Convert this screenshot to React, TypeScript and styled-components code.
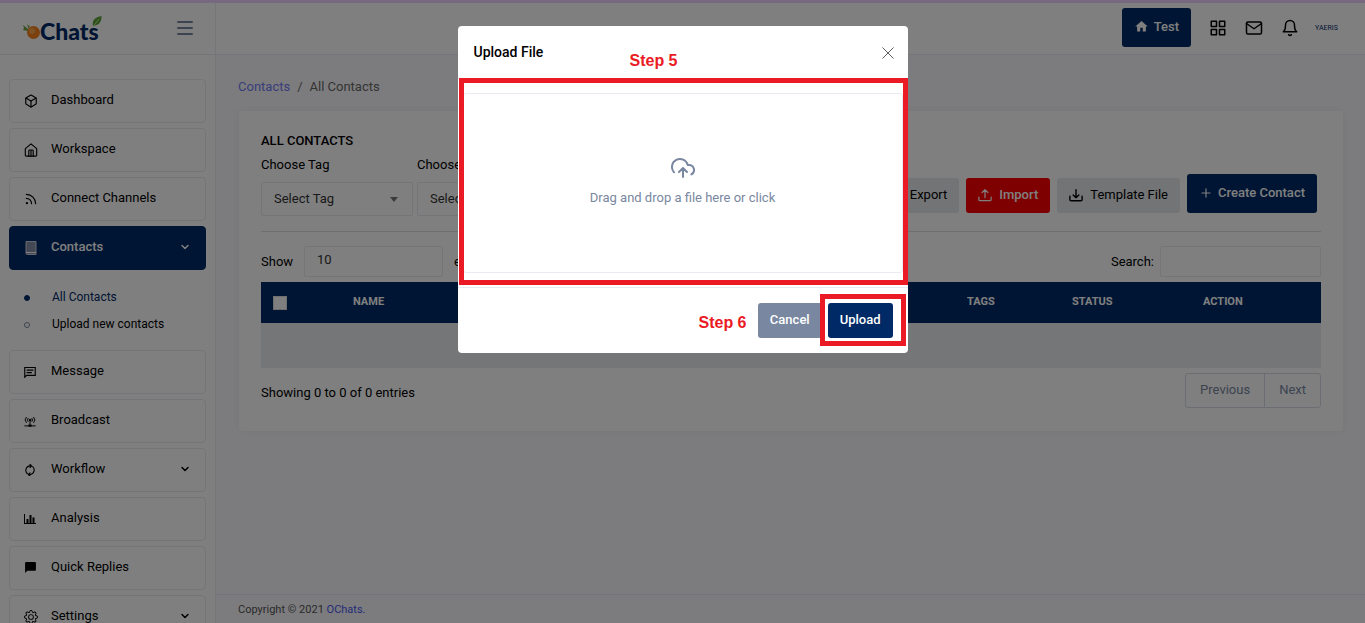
import React from "react";
import styled, { createGlobalStyle } from "styled-components";
import { FiBell, FiBox, FiChevronDown, FiGrid, FiMail, FiPlus, FiRss } from "react-icons/fi";
import { MdChatBubble, MdHome } from "react-icons/md";
import { BsGear } from "react-icons/bs";

const navy = "#002a66";
const muted = "#7987a1";
const line = "#e8ebf1";
const markRed = "#ea1b25";

const GlobalStyle = createGlobalStyle`
  *, *::before, *::after { box-sizing: border-box; }
  body {
    margin: 0;
    overflow: hidden;
    background: #f9f9fc;
    color: #000;
    font-family: Roboto, "Liberation Sans", sans-serif;
    font-size: 13px;
    line-height: 20px;
  }
  button, input, select { font: inherit; color: inherit; }
  a { color: inherit; text-decoration: none; }
`;

const Page = styled.div`
  display: flex;
  height: 100vh;
  overflow: hidden;
  border-top: 3px solid #edd2ff;
`;

const Sidebar = styled.aside`
  flex: 0 0 216px;
  background: #fff;
  border-right: 1px solid ${line};
`;

const SidebarHeader = styled.div`
  display: flex;
  align-items: center;
  justify-content: space-between;
  height: 52px;
  padding: 0 22px 2px;
  border-bottom: 1px solid ${line};
`;

const Logo = styled.a`
  display: flex;
  align-items: center;
  position: relative;
  color: ${navy};
  font-family: Lato, sans-serif;
  font-size: 23px;
  font-weight: 900;
  line-height: 24px;
  padding-top: 6px;
`;

const Leaf = styled.svg`
  position: absolute;
  top: 3px;
  right: -3px;
`;

const MenuToggle = styled.button`
  display: grid;
  gap: 4px;
  width: 16px;
  padding: 0;
  border: 0;
  background: none;
  span { height: 2px; border-radius: 1px; background: ${muted}; }
`;

const Nav = styled.nav`
  padding: 24px 9px 0;
`;

const NavItem = styled.a<{ $active?: boolean }>`
  display: flex;
  align-items: center;
  height: 44px;
  margin-bottom: 5px;
  padding: 0 14px 2px;
  border: 1px solid ${(p) => (p.$active ? navy : line)};
  border-radius: 4px;
  background: ${(p) => (p.$active ? navy : "#fff")};
  color: ${(p) => (p.$active ? "#fff" : "#000")};
  font-weight: ${(p) => (p.$active ? 500 : 400)};
`;

const NavIcon = styled.span`
  display: flex;
  width: 14px;
  margin-right: 13px;
  padding-top: 1px;
`;

const NavText = styled.span`
  flex: 1;
`;

const SubMenu = styled.ul`
  margin: 0;
  padding: 9px 0 12px 15px;
  list-style: none;
`;

const SubItem = styled.li<{ $current?: boolean }>`
  height: 27px;
  font-size: 12px;
  line-height: 27px;
  color: ${(p) => (p.$current ? navy : "#000")};
  a { display: flex; align-items: center; gap: 22px; }
  a::before {
    content: "";
    width: 6px;
    height: 6px;
    border: 1px solid ${(p) => (p.$current ? navy : muted)};
    border-radius: 50%;
    background: ${(p) => (p.$current ? navy : "transparent")};
  }
`;

const Main = styled.div`
  flex: 1;
  min-width: 0;
  display: flex;
  flex-direction: column;
`;

const Topbar = styled.header`
  display: flex;
  align-items: center;
  justify-content: flex-end;
  gap: 18px;
  height: 52px;
  padding: 0 28px 2px;
  border-bottom: 1px solid ${line};
  background: #fff;
`;

const IconButton = styled.button`
  display: flex;
  padding: 0;
  border: 0;
  background: none;
`;

const Avatar = styled.a`
  width: 22px;
  margin-left: -2px;
  color: ${navy};
  font-size: 7px;
  line-height: 8px;
`;

const Content = styled.main`
  flex: 1;
  padding: 22px 22px 0;
`;

const Breadcrumb = styled.nav`
  display: flex;
  gap: 7px;
  margin-bottom: 14px;
  color: #686868;
  a { color: #727cf5; }
`;

const Card = styled.section`
  margin-left: 1px;
  padding: 20px 22px 23px;
  border-radius: 4px;
  background: #fff;
  box-shadow: 0 0 10px rgba(183, 192, 206, 0.2);
`;

const CardTitle = styled.h1`
  margin: 0 0 4px;
  font-size: 13px;
  font-weight: 500;
  line-height: 20px;
`;

const Toolbar = styled.div`
  display: flex;
  align-items: flex-end;
  justify-content: space-between;
  padding-bottom: 15px;
  border-bottom: 1px solid #dcdfe5;
`;

const Filters = styled.div`
  display: flex;
  gap: 4px;
`;

const Field = styled.label`
  position: relative;
  display: grid;
  gap: 7px;
  width: 152px;
  &::after {
    content: "";
    position: absolute;
    right: 15px;
    bottom: 14px;
    border: 4px solid transparent;
    border-top: 5px solid #777;
    border-bottom: 0;
  }
`;

const Select = styled.select`
  appearance: none;
  height: 34px;
  padding: 0 12px;
  border: 1px solid ${line};
  border-radius: 2px;
  background: #fff;
  color: #333;
`;

const Actions = styled.div`
  display: flex;
  align-items: flex-end;
  gap: 7px;
  padding: 0 4px 3px 0;
`;

type Tone = "navy" | "red" | "grey" | "muted";
const toneColors: Record<Tone, string> = { navy, red: "#ff0000", grey: "#e6e8eb", muted };

const Button = styled.button<{ $tone: Tone; $tall?: boolean }>`
  display: flex;
  align-items: center;
  gap: ${(p) => (p.$tall ? 5 : 7)}px;
  height: ${(p) => (p.$tall ? 39 : 35)}px;
  padding: 0 12px ${(p) => (p.$tall ? 2 : 1)}px;
  border: 0;
  border-radius: 3px;
  background: ${(p) => toneColors[p.$tone]};
  color: ${(p) => (p.$tone === "grey" ? "#000" : "#fff")};
  font-weight: ${(p) => (p.$tone === "grey" ? 400 : 500)};
  white-space: nowrap;
`;

const TableTools = styled.div`
  display: flex;
  justify-content: space-between;
  padding: 14px 0 5px;
`;

const InlineField = styled.label<{ $gap: number }>`
  display: flex;
  align-items: center;
  gap: ${(p) => p.$gap}px;
`;

const LengthSelect = styled(Select)`
  width: 139px;
  height: 31px;
  padding-bottom: 3px;
`;

const SearchInput = styled.input`
  width: 161px;
  height: 31px;
  padding: 0 10px;
  border: 1px solid ${line};
  border-radius: 2px;
  background: #fff;
`;

const Table = styled.table`
  width: 100%;
  table-layout: fixed;
  border-collapse: collapse;
  th {
    height: 41px;
    padding: 0 12px 2px;
    background: ${navy};
    color: #fff;
    font-size: 11px;
    font-weight: 700;
    text-align: left;
  }
  td { height: 45px; background: #e9ecef; }
`;

const Checkbox = styled.input`
  appearance: none;
  display: block;
  width: 14px;
  height: 14px;
  margin: 3px 0 0;
  border: 1px solid #ddd;
  background: #fff;
`;

const TableFooter = styled.div`
  display: flex;
  justify-content: space-between;
  padding-top: 5px;
  p { margin: 0; padding-top: 10px; }
`;

const Pager = styled.div`
  display: flex;
  height: 35px;
  border: 1px solid #d5dae3;
  border-radius: 3px;
  button {
    padding: 0 14px 2px;
    border: 0;
    background: none;
    color: ${muted};
  }
  button + button { border-left: 1px solid #d5dae3; }
`;

const Footer = styled.footer`
  height: 29px;
  padding: 5px 22px;
  border-top: 1px solid ${line};
  color: #555;
  font-size: 11px;
  a { color: #4a55f0; }
`;

const Backdrop = styled.div`
  position: fixed;
  inset: 0;
  padding-top: 26px;
  background: rgba(0, 0, 0, 0.5);
`;

const Dialog = styled.div`
  position: relative;
  width: 450px;
  margin: 0 auto;
  border-radius: 4px;
  background: #fff;
`;

const DialogHeader = styled.div`
  display: flex;
  align-items: center;
  justify-content: space-between;
  height: 52px;
  padding: 0 14px 0 16px;
  h2 { margin: 0; font-size: 14px; font-weight: 500; }
  button { padding-top: 2px; color: #555; }
`;

const DropArea = styled.label`
  display: flex;
  flex-direction: column;
  align-items: center;
  justify-content: center;
  gap: 8px;
  height: 180px;
  margin: 15px 5px 14px;
  padding-bottom: 3px;
  border: 1px solid ${line};
  border-radius: 3px;
  color: ${muted};
  input { display: none; }
`;

const DialogFooter = styled.div`
  display: flex;
  justify-content: flex-end;
  gap: 6px;
  padding: 15px;
  border-top: 1px solid ${line};
`;

const Highlight = styled.div<{ $x: number; $y: number; $w: number; $h: number }>`
  position: absolute;
  left: ${(p) => p.$x}px;
  top: ${(p) => p.$y}px;
  width: ${(p) => p.$w}px;
  height: ${(p) => p.$h}px;
  border: 5px solid ${markRed};
  pointer-events: none;
`;

const StepLabel = styled.strong<{ $x: number; $y: number }>`
  position: absolute;
  left: ${(p) => p.$x}px;
  top: ${(p) => p.$y}px;
  color: ${markRed};
  font: bold 16px/20px "Liberation Sans", sans-serif;
`;

const Stroke = ({ size = 14, width = 1.3, children }: { size?: number; width?: number; children: React.ReactNode }) => (
  <svg width={size} height={size} viewBox="0 0 16 16" fill="none" stroke="currentColor" strokeWidth={width} strokeLinecap="round" strokeLinejoin="round" aria-hidden="true">
    {children}
  </svg>
);

const HomeIcon = () => (
  <Stroke>
    <path d="M1.500 6.500 8 1l6.500 5.500V14a1 1 0 0 1-1 1h-11a1 1 0 0 1-1-1z" />
    <path d="M5.500 15V9a1 1 0 0 1 1-1h3a1 1 0 0 1 1 1v6M8 8v7" />
  </Stroke>
);

const BookIcon = () => (
  <svg width="14" height="16" viewBox="0 0 14 16" aria-hidden="true">
    <path d="M2 1.500h10v13H3.500A1.500 1.500 0 0 1 2 13z" fill="#8791a8" stroke="#cdd2de" />
    <path d="M2 12.500h10" stroke="#fff" />
  </svg>
);

const MessageIcon = () => (
  <Stroke size={12} width={1.5}>
    <path d="M1 2h14v10.500H3.500L1 15zM4 5.500h8M4 8.800h6" strokeLinejoin="miter" />
  </Stroke>
);

const BroadcastIcon = () => (
  <Stroke size={12} width={1.3}>
    <path d="M3 3Q-.5 6.500 3 10M5.300 4.500q-1.800 2 0 4M13 3q3.500 3.500 0 7M10.700 4.500q1.800 2 0 4M8 7v7M1 14.500h14" />
    <circle cx="8" cy="6.500" r="1" fill="currentColor" />
    <path d="M7 14h2" strokeWidth="3" />
  </Stroke>
);

const SyncIcon = () => (
  <Stroke size={12} width={1.5}>
    <path d="M4.500 13A6 6 0 0 1 8 2.500h2M8 .5l2.200 2L8 4.700M11.500 3.500A6 6 0 0 1 8 14H6M8 11.800 5.800 14 8 16" />
  </Stroke>
);

const ChartIcon = () => (
  <svg width="12" height="12" viewBox="0 0 12 12" fill="currentColor" aria-hidden="true">
    <path d="M0 1h1v9h11v1H0zM2.500 6h2v4h-2zM5.500 2h2v8h-2zM8.500 4.500h2V10h-2z" />
  </svg>
);

const UploadIcon = () => (
  <Stroke width={1.4}>
    <path d="M8 11V2M4.700 5.200 8 2l3.300 3.200M1 10.500V13q0 1.500 1.500 1.500h11q1.500 0 1.500-1.500v-2.500" />
  </Stroke>
);

const DownloadIcon = () => (
  <Stroke width={1.6}>
    <path d="M8 2v9M4.700 8 8 11l3.300-3M1 9.500V13q0 1.500 1.500 1.500h11q1.500 0 1.500-1.500V9.500" />
  </Stroke>
);

const CloudIcon = () => (
  <svg width="24" height="24" viewBox="0 0 24 24" fill="none" stroke="currentColor" strokeWidth="2" strokeLinecap="round" strokeLinejoin="round" aria-hidden="true">
    <path d="m16 16-4-4-4 4M12 12v9" />
    <path d="M20.390 18.390A5 5 0 0 0 18 9h-1.260A8 8 0 1 0 3 16.300" />
  </svg>
);

const Item = ({ icon, label, more, active }: { icon: React.ReactNode; label: string; more?: boolean; active?: boolean }) => (
  <NavItem href="#" $active={active}>
    <NavIcon>{icon}</NavIcon>
    <NavText>{label}</NavText>
    {more && <FiChevronDown size={12} strokeWidth={3} />}
  </NavItem>
);

export default function App() {
  return (
    <>
      <GlobalStyle />
      <Page>
        <Sidebar>
          <SidebarHeader>
            <Logo href="#">
              <svg width="18" height="18" viewBox="0 0 18 18" aria-hidden="true">
                <path d="M6 7 1 3l1 3-1 2 5 1zM6 6l-.5-4L8 5z" fill="#6ba539" />
                <circle cx="11.500" cy="10.500" r="6.500" fill="#f5821f" />
                <circle cx="10" cy="9" r="3" fill="#fba74c" />
              </svg>
              Chats
              <Leaf width="10" height="11" viewBox="0 0 10 11" aria-hidden="true">
                <path d="M1 10Q-1 2 9.500 0 10 8 3 9.500z" fill="#5fa53a" />
                <path d="M1 10.500 7 3" stroke="#b9dc8f" fill="none" />
              </Leaf>
            </Logo>
            <MenuToggle aria-label="Toggle menu">
              <span />
              <span />
              <span />
            </MenuToggle>
          </SidebarHeader>
          <Nav>
            <Item icon={<FiBox size={14} />} label="Dashboard" />
            <Item icon={<HomeIcon />} label="Workspace" />
            <Item icon={<FiRss size={14} />} label="Connect Channels" />
            <Item icon={<BookIcon />} label="Contacts" more active />
            <SubMenu>
              <SubItem $current>
                <a href="#">All Contacts</a>
              </SubItem>
              <SubItem>
                <a href="#">Upload new contacts</a>
              </SubItem>
            </SubMenu>
            <Item icon={<MessageIcon />} label="Message" />
            <Item icon={<BroadcastIcon />} label="Broadcast" />
            <Item icon={<SyncIcon />} label="Workflow" more />
            <Item icon={<ChartIcon />} label="Analysis" />
            <Item icon={<MdChatBubble size={13} />} label="Quick Replies" />
            <Item icon={<BsGear size={14} />} label="Settings" more />
          </Nav>
        </Sidebar>

        <Main>
          <Topbar>
            <Button $tone="navy" $tall>
              <MdHome size={15} />
              Test
            </Button>
            <IconButton aria-label="Apps"><FiGrid size={18} /></IconButton>
            <IconButton aria-label="Mail"><FiMail size={18} /></IconButton>
            <IconButton aria-label="Notifications"><FiBell size={18} /></IconButton>
            <Avatar href="#">YAERIS</Avatar>
          </Topbar>

          <Content>
            <Breadcrumb>
              <a href="#">Contacts</a>
              <span>/</span>
              <span>All Contacts</span>
            </Breadcrumb>
            <Card>
              <CardTitle>ALL CONTACTS</CardTitle>
              <Toolbar>
                <Filters>
                  <Field>
                    Choose Tag
                    <Select><option>Select Tag</option></Select>
                  </Field>
                  <Field>
                    Choose
                    <Select><option>Select</option></Select>
                  </Field>
                </Filters>
                <Actions>
                  <Button $tone="grey"><UploadIcon />Export</Button>
                  <Button $tone="red"><UploadIcon />Import</Button>
                  <Button $tone="grey"><DownloadIcon />Template File</Button>
                  <Button $tone="navy" $tall><FiPlus size={14} />Create Contact</Button>
                </Actions>
              </Toolbar>
              <TableTools>
                <InlineField $gap={11}>
                  Show
                  <LengthSelect><option>10</option></LengthSelect>
                  entries
                </InlineField>
                <InlineField $gap={6}>
                  Search:
                  <SearchInput type="search" />
                </InlineField>
              </TableTools>
              <Table>
                <colgroup>
                  <col width="80" />
                  <col />
                  <col width="105" />
                  <col width="131" />
                  <col width="130" />
                </colgroup>
                <thead>
                  <tr>
                    <th><Checkbox type="checkbox" aria-label="Select all" /></th>
                    <th>NAME</th>
                    <th>TAGS</th>
                    <th>STATUS</th>
                    <th>ACTION</th>
                  </tr>
                </thead>
                <tbody>
                  <tr><td colSpan={5} /></tr>
                </tbody>
              </Table>
              <TableFooter>
                <p>Showing 0 to 0 of 0 entries</p>
                <Pager>
                  <button>Previous</button>
                  <button>Next</button>
                </Pager>
              </TableFooter>
            </Card>
          </Content>

          <Footer>
            Copyright © 2021 <a href="#">OChats.</a>
          </Footer>
        </Main>
      </Page>

      <Backdrop>
        <Dialog role="dialog" aria-modal="true" aria-labelledby="upload-title">
          <DialogHeader>
            <h2 id="upload-title">Upload File</h2>
            <IconButton aria-label="Close">
              <Stroke size={12}><path d="M1 1 15 15M15 1 1 15" /></Stroke>
            </IconButton>
          </DialogHeader>
          <DropArea>
            <CloudIcon />
            Drag and drop a file here or click
            <input type="file" />
          </DropArea>
          <DialogFooter>
            <Button $tone="muted">Cancel</Button>
            <Button $tone="navy">Upload</Button>
          </DialogFooter>
          <Highlight $x={1} $y={52} $w={449} $h={207} />
          <Highlight $x={362} $y={268} $w={86} $h={52} />
          <StepLabel $x={172} $y={25}>Step 5</StepLabel>
          <StepLabel $x={241} $y={287}>Step 6</StepLabel>
        </Dialog>
      </Backdrop>
    </>
  );
}
